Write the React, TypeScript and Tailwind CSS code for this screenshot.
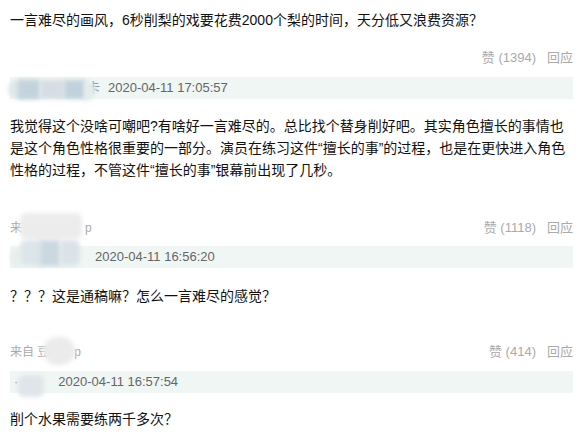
const font = {
  fontFamily: '"Liberation Sans", Arial, "Noto Sans CJK SC", sans-serif',
};

function Likes({ count }: { count: number }) {
  return (
    <div className="flex items-center gap-[11px] text-[13px] text-[#aaa]">
      <span>赞 ({count})</span>
      <span>回应</span>
    </div>
  );
}

function Footer({ left, count }: { left?: React.ReactNode; count: number }) {
  return (
    <div className="flex h-[22px] items-center justify-between text-[12px] text-[#aaa]">
      <div className="relative flex items-center">{left}</div>
      <Likes count={count} />
    </div>
  );
}

function Bar({ children }: { children: React.ReactNode }) {
  return (
    <div className="relative flex h-[22px] items-center bg-[#f0f6f3] text-[13px] text-[#666]">
      {children}
    </div>
  );
}

// blurred redaction over a user name
function Blob({ className }: { className: string }) {
  return <span className={"absolute blur-[2px] " + className} />;
}

export default function App() {
  return (
    <div
      className="flex h-[438px] w-[584px] flex-col overflow-hidden bg-white pl-[10px] pr-[11px] pt-[9px] text-[14px] leading-[22px] text-[#111]"
      style={font}
    >
      <p>一言难尽的画风，6秒削梨的戏要花费2000个梨的时间，天分低又浪费资源？</p>

      <div className="mt-[16px]">
        <Footer count={1394} />
      </div>

      <div className="mt-[8px]">
        <Bar>
          <Blob className="left-[-2px] top-[3px] h-[19px] w-[28px] rounded-l-full bg-[#dfe7ea]" />
          <Blob className="left-[8px] top-[3px] h-[19px] w-[22px] bg-[#c3d3dd]" />
          <Blob className="left-[30px] top-[3px] h-[19px] w-[24px] bg-[#d6dee5]" />
          <Blob className="left-[54px] top-[3px] h-[19px] w-[22px] bg-[#c1d2dc]" />
          <Blob className="left-[74px] top-[4px] h-[20px] w-[12px] rounded-r-full bg-[#e4ebee]" />
          <span className="ml-[77px] w-[14px] text-[#7a98b5]">卡</span>
          <span className="ml-[7px]">2020-04-11 17:05:57</span>
        </Bar>
      </div>

      <p className="mt-[16px]">
        我觉得这个没啥可嘲吧?有啥好一言难尽的。总比找个替身削好吧。其实角色擅长的事情也是这个角色性格很重要的一部分。演员在练习这件“擅长的事”的过程，也是在更快进入角色性格的过程，不管这件“擅长的事”银幕前出现了几秒。
      </p>

      <div className="mt-[36px]">
        <Footer
          count={1118}
          left={
            <>
              <span>来</span>
              <Blob className="left-[10px] top-[-4px] h-[26px] w-[62px] rounded-md bg-[#ececec]" />
              <span className="ml-[63px]">p</span>
            </>
          }
        />
      </div>

      <div className="mt-[7px]">
        <Bar>
          <Blob className="left-[0px] top-[2px] h-[20px] w-[10px] rounded-l-full bg-[#e7efe9]" />
          <Blob className="left-[10px] top-[-6px] h-[26px] w-[22px] rounded-l-md bg-[#dde5ea]" />
          <Blob className="left-[30px] top-[-6px] h-[26px] w-[20px] bg-[#cbd8e0]" />
          <Blob className="left-[50px] top-[-6px] h-[26px] w-[20px] rounded-r-md bg-[#dbe3e9]" />
          <span className="ml-[85px]">2020-04-11 16:56:20</span>
        </Bar>
      </div>

      <p className="mt-[17px]">？？？这是通稿嘛？怎么一言难尽的感觉？</p>

      <div className="mt-[34px]">
        <Footer
          count={414}
          left={
            <>
              <span>来自 豆</span>
              <Blob className="left-[33px] top-[-4px] h-[28px] w-[32px] rounded-full bg-[#ebebeb]" />
              <span className="ml-[25px]">p</span>
            </>
          }
        />
      </div>

      <div className="mt-[8px]">
        <Bar>
          <span className="ml-[4px] text-[#999]">·</span>
          <Blob className="left-[8px] top-[4px] h-[22px] w-[26px] rounded-md bg-[#dfe6ea]" />
          <span className="ml-[40px]">2020-04-11 16:57:54</span>
        </Bar>
      </div>

      <p className="mt-[15px]">削个水果需要练两千多次？</p>
    </div>
  );
}
